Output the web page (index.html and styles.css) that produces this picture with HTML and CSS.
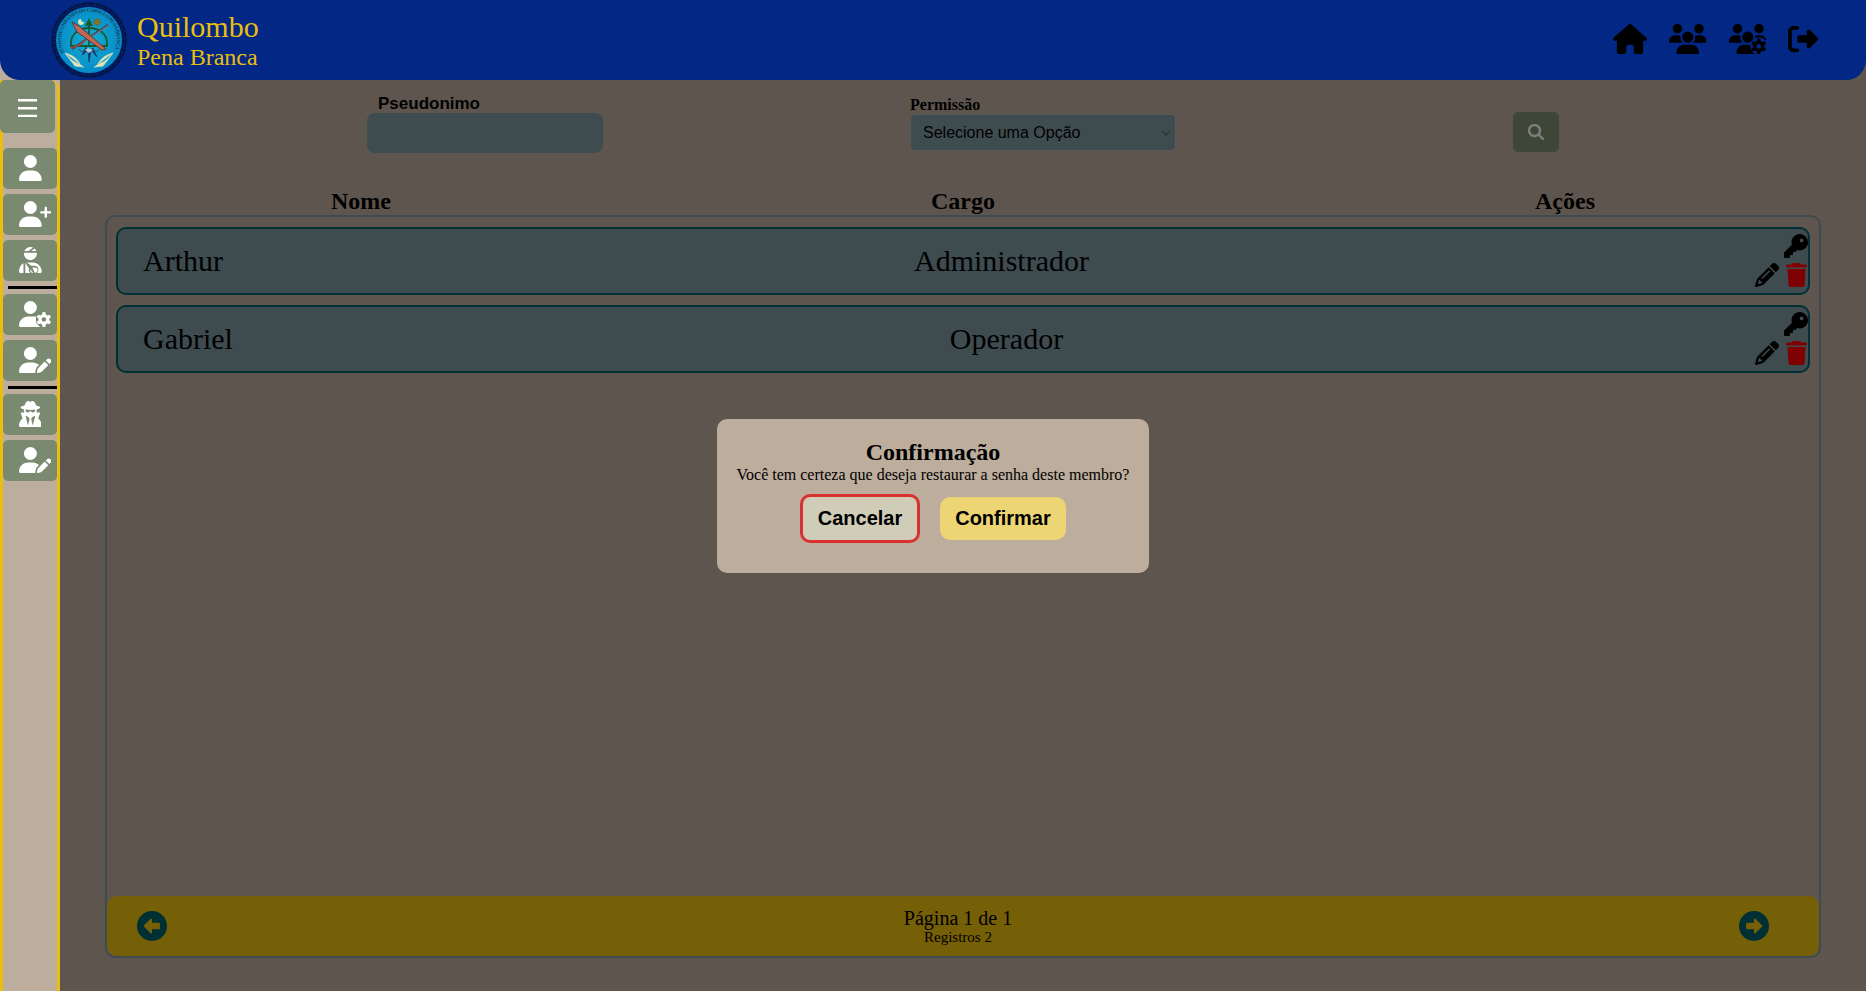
FILE: index.html
```html
<!DOCTYPE html>
<html lang="pt-BR">
<head>
<meta charset="utf-8">
<title>Quilombo Pena Branca</title>
<link rel="stylesheet" href="styles.css">
</head>
<body>
<svg class="defs" width="0" height="0">
  <defs>
    <symbol id="user" viewBox="0 0 640 512"><path d="M224 256A128 128 0 1 0 224 0a128 128 0 1 0 0 256zm-45.7 48C79.8 304 0 383.8 0 482.3C0 498.7 13.3 512 29.7 512H418.3c16.4 0 29.7-13.3 29.7-29.7C448 383.8 368.2 304 269.7 304H178.3z"/></symbol>
    <symbol id="user-plus" viewBox="0 0 640 512"><path d="M96 128a128 128 0 1 1 256 0A128 128 0 1 1 96 128zM0 482.3C0 383.8 79.8 304 178.3 304h91.4C368.2 304 448 383.8 448 482.3c0 16.4-13.3 29.7-29.7 29.7H29.7C13.3 512 0 498.7 0 482.3zM504 312V248H440c-13.3 0-24-10.7-24-24s10.7-24 24-24h64V136c0-13.3 10.7-24 24-24s24 10.7 24 24v64h64c13.3 0 24 10.7 24 24s-10.7 24-24 24H552v64c0 13.3-10.7 24-24 24s-24-10.7-24-24z"/></symbol>
    <symbol id="user-pen" viewBox="0 0 640 512"><path d="M224 256A128 128 0 1 0 224 0a128 128 0 1 0 0 256zm-45.7 48C79.8 304 0 383.8 0 482.3C0 498.7 13.3 512 29.7 512H322.8c-3.1-8.8-3.7-18.4-1.4-27.8l15-60.1c2.8-11.3 8.6-21.5 16.8-29.7l40.3-40.3c-32.1-31-75.7-50.1-123.9-50.1H178.3zm435.5-68.3c-15.6-15.6-40.9-15.6-56.6 0l-29.4 29.4 71 71 29.4-29.4c15.6-15.6 15.6-40.9 0-56.6l-14.4-14.4zM375.9 417c-4.1 4.1-7 9.2-8.4 14.9l-15 60.1c-1.4 5.5 .2 11.2 4.2 15.2s9.7 5.6 15.2 4.2l60.1-15c5.6-1.4 10.8-4.3 14.9-8.4L576.1 358.7l-71-71L375.9 417z"/></symbol>
    <symbol id="user-injured" viewBox="0 0 640 512">
      <path d="M240 80H342.7c-7.9-19.5-20.4-36.5-36.2-49.9L240 80zm37.7-68.2C261.3 4.2 243.2 0 224 0c-53.7 0-99.7 33.1-118.7 80h81.4l91-68.2zM224 256c70.7 0 128-57.3 128-128c0-5.4-.3-10.8-1-16H97c-.7 5.200-1 10.600-1 16c0 70.7 57.300 128 128 128z"/>
      <path d="M124 312.400V512h103c-18-10-35-32-35-64c0-8 2-17 5-25zM88 322C36 350 0 410 0 482.300C0 498.700 13.300 512 29.700 512H88zM152 304l90 65h62c44 0 80 36 80 80c0 25-12 47-30 63h64.300c16.400 0 29.700-13.300 29.700-29.700C448 383.800 368.200 304 269.700 304zM261 402l52 110c31-4 55-30 55-63s-28-47-64-47zM222 436c-8 36 13 66 42 76h15z"/>
    </symbol>
    <symbol id="user-secret" viewBox="0 0 448 512">
      <path d="M224 16c-6.700 0-10.800-2.800-15.500-6.100C201.900 5.400 194 0 176 0c-30.500 0-52 43.700-66 89.400C62.700 98.100 32 112.200 32 128c0 14.300 25 27.100 64.600 35.900c-.4 4-.6 8-.6 12.100c0 17 3.300 33.200 9.300 48H45.400C38 224 32 230 32 237.400c0 1.700 .3 3.400 1 5l38.800 96.900C28.200 371.800 0 423.800 0 482.300C0 498.700 13.300 512 29.700 512H418.300c16.400 0 29.700-13.300 29.700-29.700c0-58.500-28.200-110.400-71.700-143L415 242.400c.6-1.600 1-3.300 1-5c0-7.400-6-13.400-13.400-13.400H342.700c6-14.800 9.300-31 9.300-48c0-4.100-.2-8.100-.6-12.100C391 155.100 416 142.300 416 128c0-15.800-30.700-29.900-78-38.600C324 43.700 302.500 0 272 0c-18 0-25.900 5.400-32.500 9.900c-4.700 3.300-8.800 6.100-15.500 6.100zm56 208H267.600c-16.500 0-31.100-10.600-36.300-26.200c-2.300-7-12.200-7-14.500 0c-5.200 15.600-19.900 26.200-36.300 26.200H168c-22.100 0-40-17.900-40-40V169.600c28.200 4.100 61 6.400 96 6.400s67.800-2.300 96-6.400V184c0 22.100-17.900 40-40 40zm-88 96l16 32L176 480 128 288l64 32zm128-32L272 480 240 352l16-32 64-32z"/>
    </symbol>
    <g id="gear">
      <path fill-rule="evenodd" d="M-25-128Q0-134 25-128L34-88Q49-82 61-72L99-85Q117-66 124-42L94-14Q96 0 94 14L124 42Q117 66 99 85L61 72Q49 82 34 88L25 128Q0 134-25 128L-34 88Q-49 82-61 72L-99 85Q-117 66-124 42L-94 14Q-96 0-94-14L-124-42Q-117-66-99-85L-61-72Q-49-82-34-88ZM0-40a40 40 0 1 0 .1 0Z"/>
    </g>
    <mask id="gear-cut"><path fill="#fff" d="M0 0H640V512H0z"/><circle cx="490" cy="368" r="158" fill="#000"/></mask>
    <mask id="gear-cut-group"><path fill="#fff" d="M0 0H640V512H0z"/><circle cx="512" cy="376" r="148" fill="#000"/></mask>
    <symbol id="user-gear" viewBox="0 0 640 512"><g mask="url(#gear-cut)"><use href="#user-shape"/></g><use href="#gear" transform="translate(490 364) scale(1.12)"/></symbol>
    <path id="user-shape" d="M224 256A128 128 0 1 0 224 0a128 128 0 1 0 0 256zm-45.700 48C79.800 304 0 383.800 0 482.300C0 498.700 13.300 512 29.700 512H418.300V304H178.300z"/>
    <path id="group-shape" d="M144 0a80 80 0 1 1 0 160A80 80 0 1 1 144 0zM512 0a80 80 0 1 1 0 160A80 80 0 1 1 512 0zM0 298.700C0 239.800 47.800 192 106.700 192h42.700c15.900 0 31 3.500 44.600 9.700c-1.300 7.200-1.900 14.700-1.900 22.300c0 38.200 16.800 72.500 43.300 96c-.2 0-.4 0-.7 0H21.300C9.600 320 0 310.400 0 298.700zM405.300 320c-.2 0-.4 0-.7 0c26.600-23.500 43.300-57.800 43.300-96c0-7.600-.7-15-1.900-22.300c13.600-6.300 28.700-9.700 44.600-9.700h42.700C592.200 192 640 239.800 640 298.700c0 11.800-9.600 21.300-21.300 21.300H405.300zM224 224a96 96 0 1 1 192 0 96 96 0 1 1 -192 0zM128 485.300C128 411.700 187.700 352 261.300 352H378.700C452.300 352 512 411.700 512 485.300c0 14.700-11.900 26.700-26.700 26.700H154.700c-14.700 0-26.700-11.900-26.700-26.700z"/>
    <symbol id="users" viewBox="0 0 640 512"><use href="#group-shape"/></symbol>
    <symbol id="users-gear" viewBox="0 0 640 512"><g mask="url(#gear-cut-group)"><use href="#group-shape"/></g><use href="#gear" x="508" y="380"/></symbol>
    <symbol id="home" viewBox="0 0 576 512"><path d="M575.8 255.5c0 18-15 32.100-32 32.100h-32l.7 160.200c0 2.700-.2 5.400-.5 8.100V472c0 22.100-17.900 40-40 40H456c-1.100 0-2.200 0-3.300-.1c-1.400 .1-2.800 .1-4.200 .1H416 392c-22.100 0-40-17.900-40-40V448 384c0-17.700-14.300-32-32-32H256c-17.700 0-32 14.300-32 32v64 24c0 22.100-17.900 40-40 40H160 128.100c-1.500 0-3-.1-4.500-.2c-1.200 .1-2.400 .2-3.600 .2H104c-22.100 0-40-17.900-40-40V360c0-.9 0-1.900 .1-2.800V287.600H32c-18 0-32-14-32-32.100c0-9 3-17 10-24L266.400 8c7-7 15-8 22-8s15 2 21 7L564.800 231.500c8 7 12 15 11 24z"/></symbol>
    <symbol id="logout" viewBox="0 0 512 512"><path d="M377.900 105.900L500.700 228.700c7.200 7.200 11.300 17.100 11.300 27.300s-4.100 20.100-11.300 27.300L377.900 406.100c-6.400 6.400-15 9.900-24 9.900c-18.700 0-33.900-15.200-33.900-33.900l0-62.100-128 0c-17.700 0-32-14.300-32-32l0-64c0-17.700 14.300-32 32-32l128 0 0-62.100c0-18.700 15.200-33.900 33.900-33.900c9 0 17.600 3.600 24 9.900zM160 96L96 96c-17.700 0-32 14.300-32 32l0 256c0 17.700 14.300 32 32 32l64 0c17.700 0 32 14.300 32 32s-14.300 32-32 32l-64 0c-53 0-96-43-96-96L0 128C0 75 43 32 96 32l64 0c17.700 0 32 14.300 32 32s-14.300 32-32 32z"/></symbol>
    <symbol id="key" viewBox="0 0 512 512"><path d="M336 352c97.200 0 176-78.800 176-176S433.200 0 336 0S160 78.800 160 176c0 18.700 2.900 36.800 8.300 53.700L7 391c-4.500 4.500-7 10.600-7 17v80c0 13.300 10.700 24 24 24h80c13.300 0 24-10.700 24-24V448h40c13.300 0 24-10.700 24-24V384h40c6.400 0 12.500-2.500 17-7l33.300-33.300c16.900 5.400 35 8.300 53.700 8.300zM376 96a40 40 0 1 1 0 80 40 40 0 1 1 0-80z"/></symbol>
    <symbol id="pencil" viewBox="0 0 512 512"><path d="M410.300 231l11.300-11.300-33.900-33.900-62.100-62.100L291.700 89.800l-11.300 11.300-22.600 22.600L58.600 322.900c-10.400 10.400-18 23.300-22.200 37.400L1 480.700c-2.500 8.400-.2 17.500 6.100 23.700s15.300 8.500 23.700 6.100l120.300-35.400c14.100-4.200 27-11.800 37.400-22.200L387.700 253.700 410.300 231zM160 399.400l-9.100 22.700c-4 3.100-8.500 5.400-13.300 6.900L59.400 452l23-78.100c1.400-4.900 3.800-9.400 6.900-13.300l22.700-9.100v32c0 8.800 7.200 16 16 16h32zM362.700 18.700L348.300 33.200 325.700 55.800 314.300 67.100l33.900 33.900 62.100 62.100 33.900 33.900 11.300-11.300 22.600-22.600 14.500-14.500c25-25 25-65.500 0-90.500L453.300 18.700c-25-25-65.500-25-90.500 0zm-47.400 168l-144 144c-6.200 6.200-16.400 6.200-22.600 0s-6.200-16.400 0-22.600l144-144c6.200-6.200 16.400-6.200 22.600 0s6.200 16.400 0 22.600z"/></symbol>
    <symbol id="trash" viewBox="0 0 448 512"><path d="M135.200 17.700L128 32H32C14.300 32 0 46.300 0 64S14.300 96 32 96H416c17.700 0 32-14.300 32-32s-14.300-32-32-32H320l-7.200-14.300C307.400 6.800 296.300 0 284.200 0H163.800c-12.100 0-23.200 6.800-28.600 17.700zM416 128H32L53.200 467c1.600 25.300 22.600 45 47.900 45H346.900c25.300 0 46.300-19.700 47.900-45L416 128z"/></symbol>
    <symbol id="search" viewBox="0 0 512 512"><path d="M416 208c0 45.900-14.900 88.300-40 122.700L502.600 457.400c12.500 12.500 12.500 32.800 0 45.300s-32.800 12.500-45.300 0L330.700 376c-34.400 25.200-76.800 40-122.700 40C93.100 416 0 322.900 0 208S93.100 0 208 0S416 93.100 416 208zM208 352a144 144 0 1 0 0-288 144 144 0 1 0 0 288z"/></symbol>
    <symbol id="circle-right" viewBox="0 0 512 512"><path fill-rule="evenodd" d="M0 256a256 256 0 1 0 512 0a256 256 0 1 0-512 0zM393 269L280 381c-9 8-24 2-24-11V312H144c-13 0-24-11-24-24V224c0-13 11-24 24-24H256V142c0-13 15-19 24-11L393 243c7 7 7 19 0 26z"/></symbol>
  </defs>
</svg>

<header class="topbar">
  <div class="brand">
    <svg class="logo" viewBox="0 0 76 76">
      <defs><path id="ring" d="M13.500 51A28 28 0 1 1 62.500 51"/>
      <radialGradient id="sea"><stop offset="0" stop-color="#13b0d4"/><stop offset="1" stop-color="#078bc8"/></radialGradient></defs>
      <circle cx="38" cy="38" r="35.500" fill="#04236f"/>
      <circle cx="38" cy="38" r="36.700" fill="none" stroke="#061640" stroke-width="2.200" stroke-linecap="round" stroke-dasharray="4.600 2.600"/>
      <circle cx="38" cy="38" r="34.300" fill="none" stroke="#04123c" stroke-width="1.300" stroke-dasharray="3 1.200"/>
      <circle cx="38" cy="38" r="33" fill="url(#sea)"/>
      <text class="ring-text"><textPath href="#ring" textLength="112">TENDA DE UMBANDA DO CABOCLO PENA BRANCA</textPath></text>
      <path d="M20 44V41C20 21 56 21 56 41V44Z" fill="none" stroke="#17592f" stroke-width="1.800"/>
      <path d="M38 19V45M35.500 23L38 18L40.500 23Z" fill="#17592f" stroke="#17592f" stroke-width="1.800"/>
      <path d="M21 47L57 23" stroke="#404e5d" stroke-width="2.400"/><path d="M25 45L57 24" stroke="#8697a0" stroke-width=".8"/>
      <path d="M21 20L28 24L55 47L51 48L26 30Z" fill="#be6956" stroke="#552d31" stroke-width=".9"/>
      <path d="M20 46L29 43L34 38" fill="none" stroke="#8c4741" stroke-width="2"/>
      <path d="M33 20A3 3 0 1 1 30 17A2.500 2.500 0 0 0 33 20" fill="#d9e8bd"/>
      <circle cx="46" cy="20" r="2.300" fill="#dca91c" stroke="#74540c"/><path d="M46 15V25M41 20H51M42.500 16.500L49.500 23.500M49.500 16.500L42.500 23.500" stroke="#806016" stroke-width=".7"/>
      <path d="M31 53L35 45L37 49L38 60L40 49L42 46L46 55L41 49L38 47L34 51Z" fill="#173777" stroke="#1d3264" stroke-width=".7"/>
      <path d="M34 48L37 46L42 48L38 51Z" fill="#a8cbdb"/>
      <path d="M14 51C21 53 26 56 29 62C21 60 18 55 14 51L24 64L33 65M62 51C55 53 50 56 47 62C55 60 58 55 62 51L52 64L43 65" fill="#e3e6bb" stroke="#b9d8bd" stroke-width="1"/>
      <path d="M28 47C30 51 34 50 35 46M48 47C46 51 42 50 41 46" fill="none" stroke="#394860" stroke-width="1"/>
    </svg>
    <div class="brand-name"><span class="brand-main">Quilombo</span><span class="brand-sub">Pena Branca</span></div>
  </div>
  <nav class="topnav">
    <svg class="nav-home"><use href="#home"/></svg>
    <svg class="nav-users"><use href="#users"/></svg>
    <svg class="nav-users"><use href="#users-gear"/></svg>
    <svg class="nav-exit"><use href="#logout"/></svg>
  </nav>
</header>

<div class="page">
  <aside class="sidebar">
    <button class="menu"><svg viewBox="0 0 19 18"><path d="M0 0H19V2.600H0zM0 8H19V10.600H0zM0 15.700H19V18H0z"/></svg></button>
    <div class="rail">
      <button class="side"><svg><use href="#user"/></svg></button>
      <button class="side"><svg><use href="#user-plus"/></svg></button>
      <button class="side"><svg><use href="#user-injured"/></svg></button>
      <div class="sep"></div>
      <button class="side"><svg><use href="#user-gear"/></svg></button>
      <button class="side"><svg><use href="#user-pen"/></svg></button>
      <div class="sep"></div>
      <button class="side"><svg class="spy"><use href="#user-secret"/></svg></button>
      <button class="side"><svg><use href="#user-pen"/></svg></button>
    </div>
  </aside>

  <main class="content">
    <form class="filters">
      <div class="field-name"><label for="pseudonimo">Pseudonimo</label><input id="pseudonimo" type="text"></div>
      <div class="field-role"><label>Permissão</label>
        <div class="select"><span>Selecione uma Opção</span><svg viewBox="0 0 10 6"><path d="M1 1L5 5L9 1"/></svg></div></div>
      <button class="search" type="button"><svg><use href="#search"/></svg></button>
    </form>
    <div class="heads"><h2>Nome</h2><h2>Cargo</h2><h2>Ações</h2></div>
    <section class="list">
      <div class="rows">
        <div class="row"><span>Arthur</span><span>Administrador</span>
          <div class="actions"><svg class="key"><use href="#key"/></svg><div class="pair"><svg><use href="#pencil"/></svg><svg class="trash"><use href="#trash"/></svg></div></div></div>
        <div class="row"><span>Gabriel</span><span>Operador</span>
          <div class="actions"><svg class="key"><use href="#key"/></svg><div class="pair"><svg><use href="#pencil"/></svg><svg class="trash"><use href="#trash"/></svg></div></div></div>
      </div>
      <footer class="pager">
        <svg class="prev"><use href="#circle-right"/></svg>
        <div class="pages"><span class="page-no">Página 1 de 1</span><span class="total">Registros 2</span></div>
        <svg><use href="#circle-right"/></svg>
      </footer>
    </section>
  </main>
</div>

<div class="shade"></div>
<div class="dialog">
  <h2>Confirmação</h2>
  <p>Você tem certeza que deseja restaurar a senha deste membro?</p>
  <div class="choices"><button class="cancel">Cancelar</button><button class="confirm">Confirmar</button></div>
</div>
</body>
</html>
```
FILE: styles.css
```css
* { box-sizing: border-box; margin: 0; padding: 0; }
body { height: 991px; overflow: hidden; background: #bdad9c; color: #000; font-family: "Liberation Serif", "Times New Roman", serif; }
button { border: 0; font-family: "Liberation Sans", Arial, sans-serif; }
svg { display: block; fill: currentColor; }
.defs { position: absolute; }

.topbar { position: relative; z-index: 3; height: 80px; padding: 0 48px 0 51px; display: flex; justify-content: space-between; background: #022784; border-radius: 0 0 20px 20px; }
.brand { display: flex; gap: 10px; color: #eabe0e; }
.logo { width: 76px; height: 76px; margin-top: 2px; }
.ring-text { font: bold 5px "Liberation Serif", serif; fill: #193e57; }
.brand-name { display: flex; flex-direction: column; padding-top: 10px; }
.brand-main { font-size: 30px; line-height: 34px; }
.brand-sub { font-size: 24px; line-height: 27px; }
.topnav { display: flex; padding-top: 24px; }
.topnav svg { height: 30px; }
.nav-home { width: 34px; margin-right: 22px; }
.nav-users { width: 37.5px; margin-right: 22px; }
.nav-exit { width: 30px; }

.page { display: flex; height: 911px; }
.sidebar { width: 60px; border: solid #eabe0e; border-width: 0 3px; border-top-right-radius: 10px; }
.menu { position: relative; display: block; width: 55px; height: 53px; margin-left: -3px; padding: 2px 0 0 18px; background: #798a70; color: #fff; border-radius: 5px; }
.menu svg { width: 19px; height: 18px; }
.rail { display: flex; flex-direction: column; gap: 5px; padding-top: 15px; }
.side { height: 41px; padding: 0 0 1px 15.5px; background: #798a70; color: #fff; border-radius: 5px; }
.side svg { width: 32.5px; height: 26px; }
.side .spy { width: 22.75px; }
.sep { height: 3px; margin-left: 5px; background: #000; }

.content { flex: 1; display: flex; flex-direction: column; }
.filters { height: 104px; display: flex; }
.field-name { margin: 14px 0 0 307px; width: 236px; }
.field-name label { display: block; padding-left: 11px; font: bold 17px/19px "Liberation Sans", Arial, sans-serif; }
.field-name input { display: block; width: 236px; height: 40px; border: 0; border-radius: 8px; background: #7e989f; }
.field-role { margin: 16px 0 0 307px; width: 266px; }
.field-role label { display: block; font-weight: bold; font-size: 16px; line-height: 18px; }
.select { width: 266px; height: 37px; padding: 0 4px 0 12px; display: flex; align-items: center; justify-content: space-between; background: #7e989f; border: 1px solid #b4b4b4; border-radius: 5px; font: 16px "Liberation Sans", Arial, sans-serif; }
.select svg { width: 10px; height: 6px; fill: none; stroke: #666; stroke-width: 1.5; }
.search { width: 46px; height: 40px; margin: 32px 0 0 337px; padding-left: 15px; background: #7c8c70; color: #fff; border-radius: 5px; }
.search svg { width: 16px; height: 16px; stroke: #fff; stroke-width: 12px; }
.heads { height: 31px; padding-top: 3px; display: grid; grid-template-columns: repeat(3, 1fr); text-align: center; }
.heads h2 { font-size: 24px; line-height: 28px; }

.list { width: 1716px; height: 743px; margin-left: 45px; display: flex; flex-direction: column; justify-content: space-between; border: 2px solid #7e989f; border-radius: 10px; }
.rows { display: flex; flex-direction: column; gap: 10px; padding: 10px 9px; }
.row { height: 68px; padding-left: 25px; display: flex; justify-content: space-between; align-items: center; background: #7e989f; border: 2px solid #006068; border-radius: 10px; font-size: 30px; }
.actions { width: 28px; display: flex; flex-direction: column; align-items: flex-end; gap: 5px; padding-bottom: 1px; }
.actions svg { width: 24px; height: 24px; }
.pair { display: flex; gap: 7px; padding-right: 1px; }
.pair .trash { width: 21px; color: #f00; }
.pager { height: 60px; padding: 0 50px 0 30px; display: flex; align-items: center; justify-content: space-between; background: #eabe0e; border-radius: 10px; }
.pager svg { width: 30px; height: 30px; color: #006068; }
.pager .prev { transform: scaleX(-1); }
.pages { display: flex; flex-direction: column; align-items: center; padding-left: 10px; }
.page-no { font-size: 20px; line-height: 22px; }
.total { font-size: 15px; line-height: 17px; }

.shade { position: absolute; z-index: 1; inset: 0 0 0 60px; background: rgba(0, 0, 0, .5); }
.dialog { position: absolute; z-index: 4; left: 717px; top: 419px; width: 432px; height: 154px; padding-top: 20px; display: flex; flex-direction: column; align-items: center; background: #bdad9c; border-radius: 10px; }
.dialog h2 { font-size: 24px; line-height: 27px; }
.dialog p { font-size: 16px; line-height: 18px; white-space: nowrap; }
.choices { display: flex; align-items: center; gap: 20px; margin-top: 10px; }
.choices button { border-radius: 10px; font-weight: bold; font-size: 20px; }
.cancel { width: 120px; height: 49px; background: #cfccb7; border: 3px solid #d93030; }
.confirm { width: 126px; height: 43px; background: #edd574; }
```
